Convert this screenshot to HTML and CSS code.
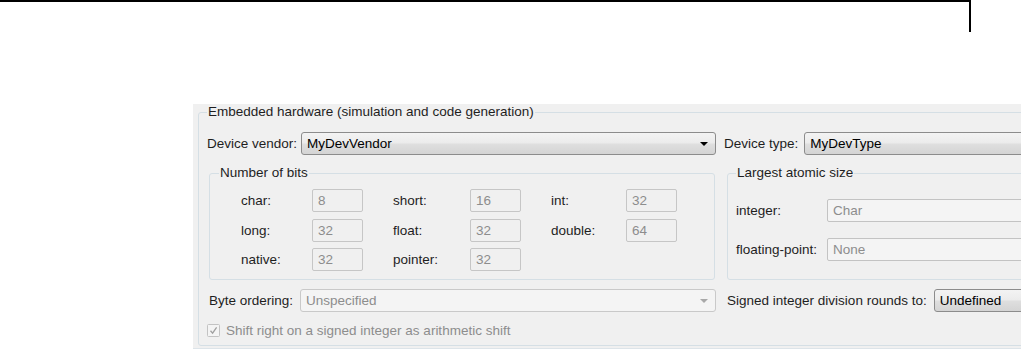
FILE: index.html
```html
<!DOCTYPE html>
<html lang="en">
<head>
    <meta charset="UTF-8">
    <title>Hardware Implementation</title>
    <link rel="stylesheet" href="styles.css">
</head>
<body>
    <div class="top-rule"></div>

    <div class="panel">
        <fieldset class="group outer">
            <legend>Embedded hardware (simulation and code generation)</legend>

            <div class="row device-row">
                <span class="label">Device vendor:</span>
                <div class="combo vendor"><span>MyDevVendor</span><i class="arrow"></i></div>
                <span class="label type-label">Device type:</span>
                <div class="combo devtype"><span>MyDevType</span><i class="arrow"></i></div>
            </div>

            <div class="row boxes-row">
                <fieldset class="group bits">
                    <legend>Number of bits</legend>
                    <div class="bits-grid">
                        <span class="label">char:</span><div class="field">8</div>
                        <span class="label">short:</span><div class="field">16</div>
                        <span class="label">int:</span><div class="field">32</div>

                        <span class="label">long:</span><div class="field">32</div>
                        <span class="label">float:</span><div class="field">32</div>
                        <span class="label">double:</span><div class="field">64</div>

                        <span class="label">native:</span><div class="field">32</div>
                        <span class="label">pointer:</span><div class="field">32</div>
                    </div>
                </fieldset>

                <fieldset class="group atomic">
                    <legend>Largest atomic size</legend>
                    <div class="atomic-grid">
                        <span class="label">integer:</span><div class="field wide">Char</div>
                        <span class="label">floating-point:</span><div class="field wide">None</div>
                    </div>
                </fieldset>
            </div>

            <div class="row order-row">
                <span class="label byte-label">Byte ordering:</span>
                <div class="combo disabled byte"><span>Unspecified</span><i class="arrow"></i></div>
                <span class="label rounds-label">Signed integer division rounds to:</span>
                <div class="combo rounds"><span>Undefined</span><i class="arrow"></i></div>
            </div>

            <label class="check-row">
                <span class="checkbox">
                    <svg width="13" height="13" viewBox="0 0 13 13">
                        <rect x="0.5" y="0.5" width="12" height="12" rx="1" fill="#f4f4f4" stroke="#c3c3c3"/>
                        <path d="M3.5 6.8 L5.6 9.2 L9.6 3.4" fill="none" stroke="#a0a0a0" stroke-width="1.3"/>
                    </svg>
                </span>
                <span class="check-text">Shift right on a signed integer as arithmetic shift</span>
            </label>
        </fieldset>
    </div>
</body>
</html>
```

FILE: styles.css
```css
/* General styles */
body {
    margin: 0;
    font-family: "Liberation Sans", Arial, sans-serif;
    font-size: 13.5px;
    color: #1e1e1e;
    background-color: #fff;
    overflow: hidden;
    height: 351px;
}

.top-rule {
    width: 971px;
    height: 32px;
    border-top: 2px solid #000;
    border-right: 2px solid #000;
    box-sizing: border-box;
}

.panel {
    margin-top: 72px;
    margin-left: 193px;
    width: 1000px;
    height: 245px;
    padding-left: 5px;
    background-color: #f0f0f0;
    border-bottom: 1px solid #dde4e9;
    box-sizing: border-box;
}

.group {
    margin: 0;
    border: 1px solid #d5dfe5;
    border-radius: 3px;
    min-width: 0;
}

.group legend {
    padding: 0 1px;
    line-height: 16px;
}

.outer {
    height: 242px;
    padding: 0 0 0 8px;
    box-sizing: border-box;
}

.row {
    display: flex;
    align-items: center;
}

.label {
    white-space: nowrap;
}

/* Combo boxes */
.combo {
    position: relative;
    height: 23px;
    box-sizing: border-box;
    display: flex;
    align-items: center;
    padding-left: 5px;
    border: 1px solid #8c8c8c;
    border-radius: 3px;
    background: linear-gradient(#f3f3f3 0%, #ececec 45%, #dedede 55%, #d4d4d4 100%);
    color: #000;
}

.combo .arrow {
    position: absolute;
    right: 7px;
    top: 9px;
    width: 0;
    height: 0;
    border-left: 4px solid transparent;
    border-right: 4px solid transparent;
    border-top: 4px solid #000;
}

.combo.disabled {
    background: #f4f4f4;
    border-color: #c9c9c9;
    color: #8d8d8d;
}

.combo.disabled .arrow {
    border-top-color: #a8a8a8;
}

.device-row {
    margin-top: 12px;
}

.vendor {
    width: 415px;
    margin-left: 4px;
}

.type-label {
    margin-left: 8px;
}

.devtype {
    width: 300px;
    margin-left: 6px;
}

/* Inner group boxes */
.boxes-row {
    align-items: stretch;
    margin-top: 10px;
    margin-left: 2px;
}

.bits {
    width: 506px;
    height: 115px;
    padding: 0 0 0 31px;
    box-sizing: border-box;
}

.bits legend {
    margin-left: -22px;
}

.bits-grid {
    display: grid;
    grid-template-columns: 71px 81px 77px 81px 75px 51px;
    grid-auto-rows: 23px;
    row-gap: 6.5px;
    align-items: center;
    margin-top: 8px;
}

.field {
    width: 51px;
    height: 23px;
    box-sizing: border-box;
    display: flex;
    align-items: center;
    padding-left: 5px;
    border: 1px solid #c6c6c6;
    border-radius: 2px;
    background-color: #f0f0f0;
    color: #8d8d8d;
}

.atomic {
    width: 300px;
    height: 115px;
    margin-left: 12px;
    padding: 0 0 0 8px;
    box-sizing: border-box;
}

.atomic-grid {
    display: grid;
    grid-template-columns: 91px 1fr;
    grid-auto-rows: 23px;
    row-gap: 16px;
    align-items: center;
    margin-top: 18px;
}

.field.wide {
    width: auto;
    border-color: #c3c3c3;
    background-color: #f4f4f4;
}

/* Byte ordering row */
.order-row {
    margin-top: 9px;
}

.byte-label {
    margin-left: 2px;
}

.byte {
    width: 416px;
    margin-left: 7px;
}

.rounds-label {
    margin-left: 11px;
}

.rounds {
    width: 120px;
    margin-left: 7px;
}

.check-row {
    display: flex;
    align-items: center;
    margin-top: 11px;
    color: #8d8d8d;
}

.checkbox {
    display: flex;
    width: 13px;
    height: 13px;
}

.check-text {
    margin-left: 6px;
}
```
